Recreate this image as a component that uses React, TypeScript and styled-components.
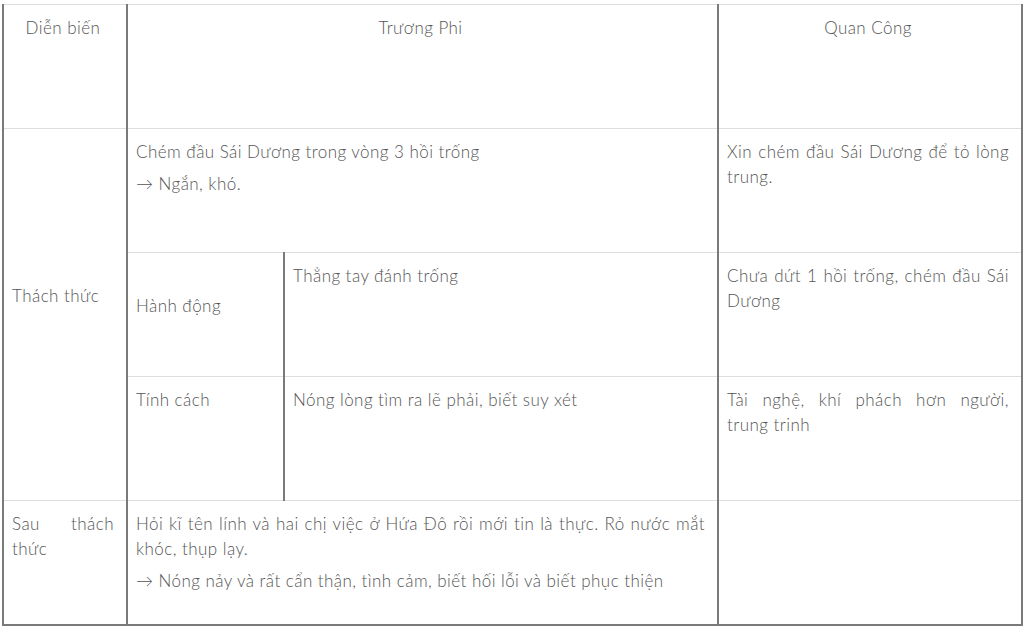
import React from "react";
import styled, { createGlobalStyle } from "styled-components";

const GlobalStyle = createGlobalStyle`
  html, body {
    margin: 0;
    padding: 0;
    background: #ffffff;
  }
  body {
    font-family: Lato, "Open Sans", "Noto Sans", sans-serif;
    color: #555555;
  }
`;

const Page = styled.div`
  padding: 4px 3px 0 2px;
`;

const Table = styled.table`
  width: 1019px;
  border-collapse: collapse;
  table-layout: fixed;
  font-size: 17px;
  font-weight: 300;
  letter-spacing: 0.45px;
  line-height: 25px;
`;

const Row = styled.tr`
  height: 124px;
`;

const Cell = styled.td<{ $align?: "left" | "center"; $valign?: "top" | "middle"; $shift?: number }>`
  border-left: 2px solid #7a7a7a;
  border-right: 2px solid #7a7a7a;
  border-top: 1px solid #dedede;
  border-bottom: 1px solid #dedede;
  padding: ${(p) => (p.$shift ? `0 12px ${p.$shift}px 8px` : "10px 12px 0 8px")};
  vertical-align: ${(p) => p.$valign || "top"};
  text-align: ${(p) => p.$align || "left"};
`;

const BottomCell = styled(Cell)`
  border-bottom: 2px solid #7a7a7a;
`;

const Line = styled.div<{ $justify?: boolean }>`
  text-align: ${(p) => (p.$justify ? "justify" : "inherit")};
  text-align-last: ${(p) => (p.$justify ? "justify" : "auto")};
`;

const Para = styled.div`
  & + & {
    margin-top: 7px;
  }
`;

export default function App() {
  return (
    <Page>
      <GlobalStyle />
      <Table>
        <colgroup>
          <col style={{ width: 124 }} />
          <col style={{ width: 157 }} />
          <col style={{ width: 434 }} />
          <col style={{ width: 304 }} />
        </colgroup>
        <tbody>
          <Row>
            <Cell $align="center">Diễn biến</Cell>
            <Cell $align="center" colSpan={2}>
              Trương Phi
            </Cell>
            <Cell $align="center">Quan Công</Cell>
          </Row>
          <Row>
            <Cell rowSpan={3} $valign="middle" $shift={38}>
              Thách thức
            </Cell>
            <Cell colSpan={2}>
              <Para>Chém đầu Sái Dương trong vòng 3 hồi trống</Para>
              <Para>→ Ngắn, khó.</Para>
            </Cell>
            <Cell>
              <Line $justify>Xin chém đầu Sái Dương để tỏ lòng</Line>
              <Line>trung.</Line>
            </Cell>
          </Row>
          <Row>
            <Cell $valign="middle" $shift={18}>
              Hành động
            </Cell>
            <Cell>Thẳng tay đánh trống</Cell>
            <Cell>
              <Line $justify>Chưa dứt 1 hồi trống, chém đầu Sái</Line>
              <Line>Dương</Line>
            </Cell>
          </Row>
          <Row>
            <Cell>Tính cách</Cell>
            <Cell>Nóng lòng tìm ra lẽ phải, biết suy xét</Cell>
            <Cell>
              <Line $justify>Tài nghệ, khí phách hơn người,</Line>
              <Line>trung trinh</Line>
            </Cell>
          </Row>
          <Row>
            <BottomCell>
              <Line $justify>Sau thách</Line>
              <Line>thức</Line>
            </BottomCell>
            <BottomCell colSpan={2}>
              <Para>
                <Line $justify>
                  Hỏi kĩ tên lính và hai chị việc ở Hứa Đô rồi mới tin là thực. Rỏ nước mắt
                </Line>
                <Line>khóc, thụp lạy.</Line>
              </Para>
              <Para>→ Nóng nảy và rất cẩn thận, tình cảm, biết hối lỗi và biết phục thiện</Para>
            </BottomCell>
            <BottomCell />
          </Row>
        </tbody>
      </Table>
    </Page>
  );
}
